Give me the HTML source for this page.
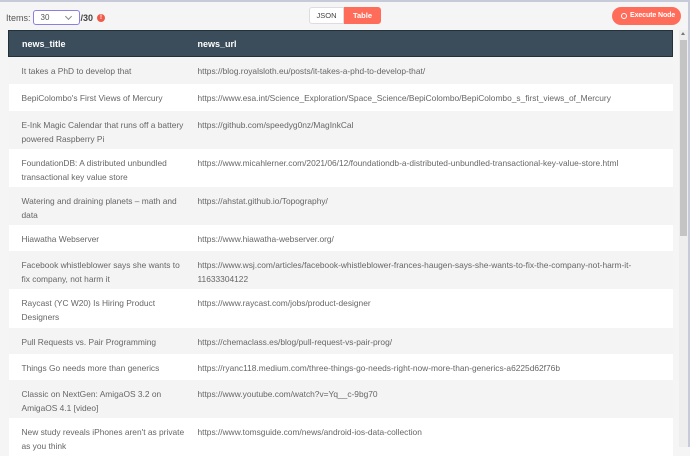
<!DOCTYPE html>
<html><head><meta charset="utf-8"><style>
*{margin:0;padding:0;box-sizing:border-box}
body{width:690px;height:447px;overflow:hidden;background:#f5f5f5;font-family:"Liberation Sans","DejaVu Sans",sans-serif;position:relative}
.topline{position:absolute;left:0;top:0;width:690px;height:2px;background:#c7cbd9}
.rline{position:absolute;right:0;top:0;width:2px;height:447px;background:#c7cbd9}
.items{position:absolute;left:6px;top:10px;font-size:9px;color:#555;display:flex;align-items:center}
.sel{margin-left:2px;width:47px;height:15px;border:1px solid #8a7fe0;border-radius:3px;background:#fff;font-size:8px;color:#555;padding-left:7px;line-height:13px;position:relative}
.sel:after{content:"";position:absolute;right:8px;top:3px;width:4px;height:4px;border-right:1px solid #888;border-bottom:1px solid #888;transform:rotate(45deg)}
.cnt{margin-left:1px;font-weight:bold;color:#444}
.warn{margin-left:4px;width:8px;height:8px;border-radius:50%;background:#ef5a4a;color:#fff;font-size:6px;font-weight:bold;text-align:center;line-height:8px}
.tog{position:absolute;left:309px;top:7px;height:17px;display:flex;font-size:7.5px}
.tog div{height:17px;line-height:15px;text-align:center;border:1px solid #ddd}
.j{width:35px;background:#fff;color:#444;border-radius:3px 0 0 3px}
.t{width:37px;background:#ff6d5a;color:#fff;font-weight:bold;border-color:#ff6d5a!important;border-radius:0 3px 3px 0}
.exec{position:absolute;left:612px;top:7px;width:69px;height:18px;border-radius:9px;background:#ff6d5a;color:#fff;font-size:7px;font-weight:bold;line-height:18px;padding-left:18px;white-space:nowrap;letter-spacing:-0.1px}
.exec:before{content:"";position:absolute;left:9px;top:6px;width:4px;height:4px;border:1.5px solid #fff;border-radius:50%}
table{position:absolute;left:8px;top:30px;width:664px;border-collapse:collapse;font-size:8.4px;color:#666;table-layout:fixed}
th{background:#3b4d5b;color:#fff;font-weight:bold;font-size:9px;text-align:left;height:26px;border-top:1px solid #243038;border-bottom:1px solid #243038}
th:first-child{border-left:1px solid #243038}
th:last-child{border-right:1px solid #243038}
td{vertical-align:top;padding-top:7px;line-height:14px;white-space:nowrap;overflow:hidden}
th:first-child,td:first-child{padding-left:13px}
tr:nth-child(odd) td{background:#fff}
tr:nth-child(even) td{background:#f4f4f4}
.sb{position:absolute;left:679px;top:30px;width:9px;height:417px;background:#eee}
.th{position:absolute;left:680px;top:40px;width:7px;height:196px;background:#c4c4c4}
.ar{position:absolute;left:681px;top:32px;border-left:2.5px solid transparent;border-right:2.5px solid transparent;border-bottom:3px solid #777}
</style></head><body>
<div class="topline"></div>
<div class="items">Items:<div class="sel">30</div><span class="cnt">/30</span><div class="warn">!</div></div>
<div class="tog"><div class="j">JSON</div><div class="t">Table</div></div>
<div class="exec">Execute Node</div>
<table>
<colgroup><col style="width:189px"><col style="width:475px"></colgroup>
<tr><th>news_title</th><th>news_url</th></tr>
<tr style="height:27px"><td>It takes a PhD to develop that</td><td>https://blog.royalsloth.eu/posts/it-takes-a-phd-to-develop-that/</td></tr>
<tr style="height:27px"><td>BepiColombo's First Views of Mercury</td><td>https://www.esa.int/Science_Exploration/Space_Science/BepiColombo/BepiColombo_s_first_views_of_Mercury</td></tr>
<tr style="height:38px"><td>E-Ink Magic Calendar that runs off a battery<br>powered Raspberry Pi</td><td>https://github.com/speedyg0nz/MagInkCal</td></tr>
<tr style="height:38px"><td>FoundationDB: A distributed unbundled<br>transactional key value store</td><td>https://www.micahlerner.com/2021/06/12/foundationdb-a-distributed-unbundled-transactional-key-value-store.html</td></tr>
<tr style="height:38px"><td>Watering and draining planets – math and<br>data</td><td>https://ahstat.github.io/Topography/</td></tr>
<tr style="height:26px"><td>Hiawatha Webserver</td><td>https://www.hiawatha-webserver.org/</td></tr>
<tr style="height:38px"><td>Facebook whistleblower says she wants to<br>fix company, not harm it</td><td>https://www.wsj.com/articles/facebook-whistleblower-frances-haugen-says-she-wants-to-fix-the-company-not-harm-it-<br>11633304122</td></tr>
<tr style="height:39px"><td>Raycast (YC W20) Is Hiring Product<br>Designers</td><td>https://www.raycast.com/jobs/product-designer</td></tr>
<tr style="height:26px"><td>Pull Requests vs. Pair Programming</td><td>https://chemaclass.es/blog/pull-request-vs-pair-prog/</td></tr>
<tr style="height:26px"><td>Things Go needs more than generics</td><td>https://ryanc118.medium.com/three-things-go-needs-right-now-more-than-generics-a6225d62f76b</td></tr>
<tr style="height:38px"><td>Classic on NextGen: AmigaOS 3.2 on<br>AmigaOS 4.1 [video]</td><td>https://www.youtube.com/watch?v=Yq__c-9bg70</td></tr>
<tr style="height:38px"><td>New study reveals iPhones aren't as private<br>as you think</td><td>https://www.tomsguide.com/news/android-ios-data-collection</td></tr>
</table>
<div class="sb"></div><div class="th"></div><div class="ar"></div>
<div class="rline"></div>
</body></html>
